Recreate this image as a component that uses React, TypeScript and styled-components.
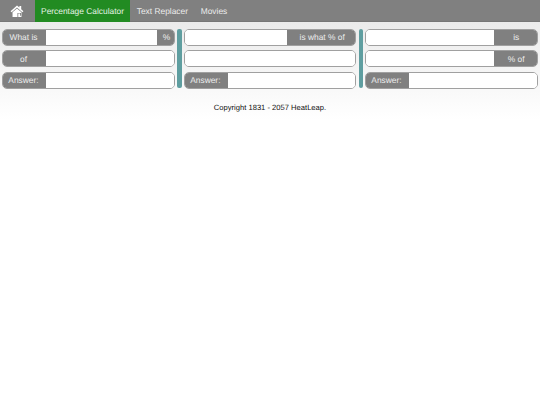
import React from "react";
import styled, { createGlobalStyle } from "styled-components";

const Global = createGlobalStyle`
  html, body { margin: 0; padding: 0; background: #fff; font-family: "Liberation Sans", Arial, sans-serif; text-rendering: geometricPrecision; }
`;
const Page = styled.div`
  width: 540px; height: 405px; overflow: hidden; opacity: 0.999;
  background: linear-gradient(to bottom, #ebebeb 22px, #fff 120px, #fff 100%);
`;
const Nav = styled.nav`
  display: flex; height: 22px; background: #808080;
  box-shadow: inset 0 -1px 0 #777;
`;
const HomeItem = styled.a`
  width: 34.7px; display: flex; align-items: center; justify-content: center;
`;
const NavItem = styled.a<{ $active?: boolean }>`
  display: flex; align-items: center; padding: 0 6.4px;
  font-size: 8.4px; color: ${p => (p.$active ? "#e4f2e4" : "#ececec")};
  background: ${p => (p.$active ? "#228b22" : "transparent")};
`;
const Columns = styled.main`
  display: grid; grid-template-columns: 173px 172.7px 172.7px; column-gap: 8.65px;
  padding: 6.5px 0 0 2px;
`;
const Column = styled.section<{ $divider?: boolean }>`
  display: flex; flex-direction: column; gap: 4.5px; position: relative;
  ${p => p.$divider ? `&::after { content: ""; position: absolute; right: -6.5px; top: 0.5px; bottom: 0.5px; width: 4.3px; border-radius: 2px; background: #5f9ea0; }` : ""}
`;
const Row = styled.div`
  display: flex; height: 17px; box-sizing: border-box;
  border: 1px solid #a0a0a0; border-radius: 5px; overflow: hidden; background: #fff;
`;
const Label = styled.span<{ $w: number; $end?: boolean }>`
  flex: 0 0 ${p => p.$w}px; box-sizing: border-box; background: #808080; color: #ececec; font-size: 8.4px;
  display: flex; align-items: center; justify-content: center; white-space: nowrap;
  ${p => (p.$end ? "padding-left: 2px;" : "padding-right: 2px;")}
`;
const Field = styled.input`
  flex: 1; min-width: 0; border: 0; padding: 0; outline: 0; background: #fff;
`;
const Copyright = styled.footer`
  margin-top: 13.5px; text-align: center; font-size: 7.6px; color: #111; line-height: 11px;
`;

const L = ({ w, t, end }: { w: number; t: string; end?: boolean }) => <Label $w={w} $end={end}>{t}</Label>;

export default function App() {
  return (
    <Page>
      <Global />
      <Nav>
        <HomeItem>
          <svg width="14" height="12.5" viewBox="0 0 15 14">
            <path d="M7.5 0.5 L0.3 7 L1.5 8.2 L7.5 2.9 L13.5 8.2 L14.7 7 L12.2 4.7 V1 H10.2 V2.9 Z" fill="#fff" />
            <path d="M2.5 8.2 L7.5 3.9 L12.5 8.2 V13.5 H8.9 V9.5 H11 V12 H12 V9 H8 V13.5 H2.5 Z" fill="#fff" />
          </svg>
        </HomeItem>
        <NavItem $active>Percentage Calculator</NavItem>
        <NavItem>Text Replacer</NavItem>
        <NavItem>Movies</NavItem>
      </Nav>
      <Columns>
        <Column $divider>
          <Row><L w={43} t="What is" /><Field /><L w={17} t="%" end /></Row>
          <Row><L w={43} t="of" /><Field /></Row>
          <Row><L w={43} t="Answer:" /><Field /></Row>
        </Column>
        <Column $divider>
          <Row><Field /><L w={68.3} t="is what % of" end /></Row>
          <Row><Field /></Row>
          <Row><L w={43.4} t="Answer:" /><Field /></Row>
        </Column>
        <Column>
          <Row><Field /><L w={43} t="is" end /></Row>
          <Row><Field /><L w={43} t="% of" end /></Row>
          <Row><L w={43} t="Answer:" /><Field /></Row>
        </Column>
      </Columns>
      <Copyright>Copyright 1831 - 2057 HeatLeap.</Copyright>
    </Page>
  );
}
